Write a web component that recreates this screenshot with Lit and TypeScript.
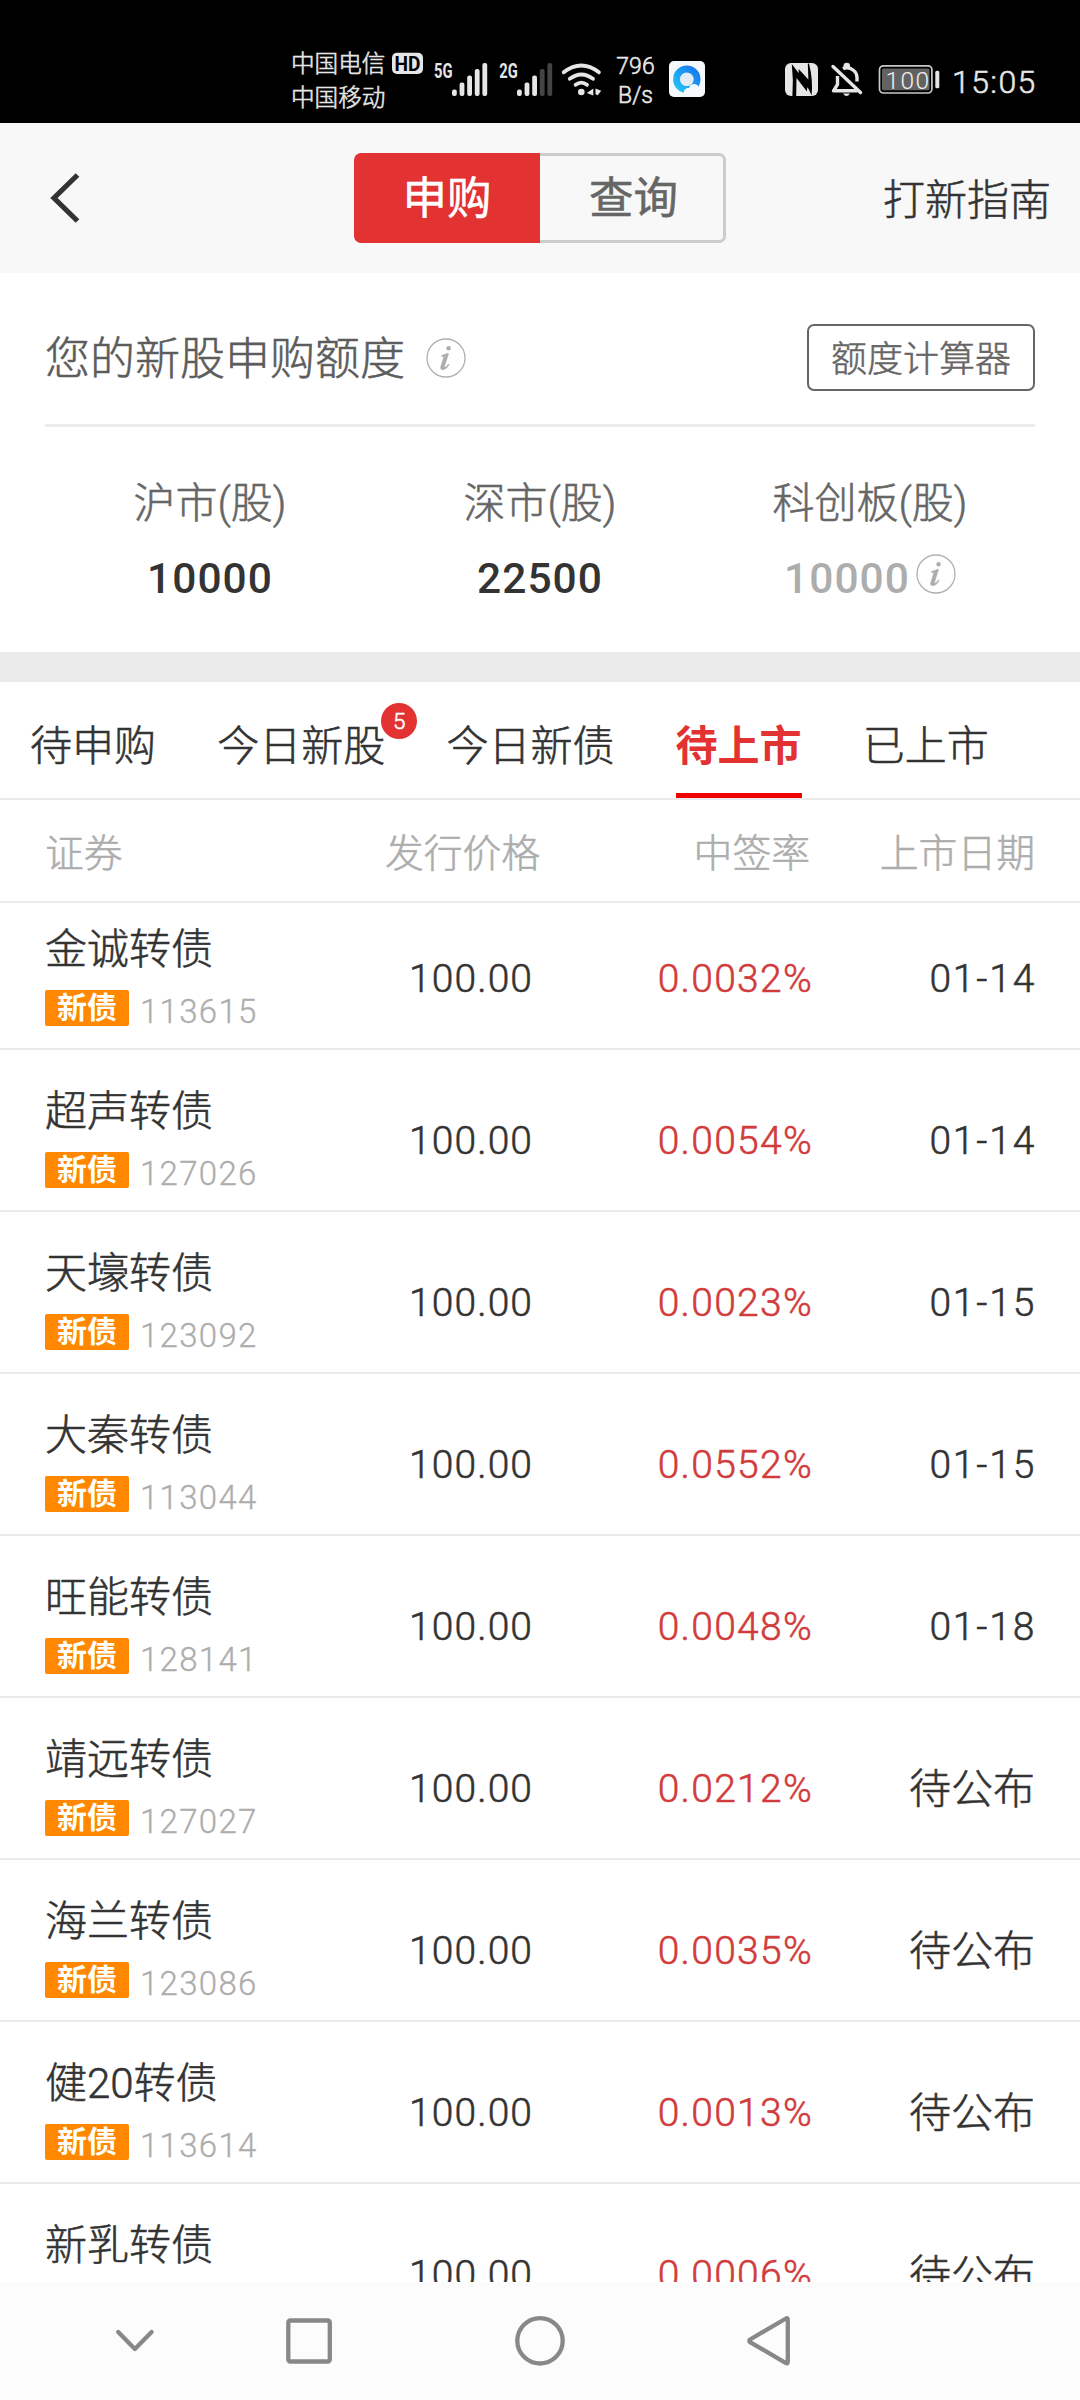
import { LitElement, html, svg, css } from "lit";
import { customElement, property } from "lit/decorators.js";
import { classMap } from "lit/directives/class-map.js";

const BONDS = [
  ["金诚转债", "113615", "0.0032%", "01-14"],
  ["超声转债", "127026", "0.0054%", "01-14"],
  ["天壕转债", "123092", "0.0023%", "01-15"],
  ["大秦转债", "113044", "0.0552%", "01-15"],
  ["旺能转债", "128141", "0.0048%", "01-18"],
  ["靖远转债", "127027", "0.0212%", "待公布"],
  ["海兰转债", "123086", "0.0035%", "待公布"],
  ["健20转债", "113614", "0.0013%", "待公布"],
  ["新乳转债", "", "0.0006%", "待公布"],
];

const TABS = [
  { label: "待申购" },
  { label: "今日新股", badge: 5 },
  { label: "今日新债" },
  { label: "待上市", active: true },
  { label: "已上市" },
];

@customElement("status-bar")
export class StatusBar extends LitElement {
  static styles = css`
    :host {
      display: flex;
      height: 123px;
      background: #000;
      color: #e6e6e6;
      font-family: Roboto, "Noto Sans CJK SC", sans-serif;
      font-weight: 300;
      box-sizing: border-box;
      padding: 46px 0 0 291px;
    }
    .carriers { width: 94px; font-size: 23.6px; line-height: 34px; white-space: nowrap; padding-top: 1px; }
    .net { font-weight: 700; fill: #e6e6e6; }
    .bold { -webkit-text-stroke: 0; }
    .speed {
      width: 45px;
      margin-left: 41px;
      text-align: center;
      font-size: 23px;
      line-height: 29px;
      padding-top: 6px;
    }
    .rest { display: block; width: 284px; height: 68px; margin-left: 7px; }
    .left { display: block; width: 221px; height: 68px; margin-right: -39px; margin-left: 5px; }
    .clock { font-size: 32px; line-height: 36px; padding-top: 18px; margin-left: 3px; letter-spacing: 1.4px; }
  `;

  private bars(x: number, lit: number) {
    const tops = [43.5, 36.5, 29.5, 23, 17];
    return tops.map(
      (top, i) => svg`<rect x=${x + i * 7.6} y=${top} width="4.8" height=${50 - top} rx="2"
        fill=${i < lit ? "#e6e6e6" : "#444"}></rect>`,
    );
  }

  render() {
    return html`
      <div class="carriers">中国电信<br />中国移动</div>
      <svg class="left" viewBox="390 46 221 68">
        <rect x="392" y="52.7" width="31" height="21.3" rx="5" fill="#e6e6e6"></rect>
        <text class="bold" x="394.500" y="70.500" font-size="20.500" textLength="26" lengthAdjust="spacingAndGlyphs"
          font-weight="700" fill="#000">HD</text>
        <text x="434" y="77.5" font-size="20" textLength="18.5" lengthAdjust="spacingAndGlyphs" class="net bold">5G</text>
        <text x="499.3" y="77.5" font-size="20" textLength="18.5" lengthAdjust="spacingAndGlyphs" class="net bold">2G</text>
        <g transform="translate(0 46)">${this.bars(452, 5)}${this.bars(517, 3)}</g>
        <g fill="none" stroke="#e6e6e6" stroke-width="3.8" stroke-linecap="round">
          <path d="M563.7 72.3q17.6 -13.6 35.2 0"></path>
          <path d="M569.8 78.8q11.6 -8.6 23.2 0"></path>
          <path d="M575.6 84.8q5.7 -4.4 11.4 0"></path>
        </g>
        <circle cx="581.3" cy="92" r="3.3" fill="#e6e6e6"></circle>
        <path d="M593.3 88.5v7l-6.5 -2.5zM595.5 88.5l5.7 2.2l-3.4 4.6l-2.3 -1z" fill="#e6e6e6"></path>
      </svg>
      <div class="speed">796<br />B/s</div>
      <svg class="rest" viewBox="665 46 284 68">
        <defs>
          <linearGradient id="ring" x1="0" y1="1" x2="1" y2="0">
            <stop offset="0" stop-color="#22c4f5"></stop><stop offset="1" stop-color="#1677ef"></stop>
          </linearGradient>
        </defs>
        <rect x="669" y="61" width="36" height="36" rx="5" fill="#f6f9fc"></rect>
        <circle cx="686.8" cy="79.3" r="10.3" fill="#e3ebf4" stroke="url(#ring)" stroke-width="6.8"></circle>
        <path d="M684 94c-1-4 2-6.500 5-6c1-4.500 8-5.500 9.500-1c4 0 5 4 3 7z" fill="#f6f9fc"></path>
        <rect x="785" y="63" width="33" height="33" rx="6" fill="#e6e6e6"></rect>
        <path d="M791.800 64q1.800 16 .6 32h3.800l.3 -18l10.500 13.500l.2 -7.500l-10.500 -13.500z
          M811.600 95.500q1.500 -16 -2.600 -32h-1.200l.6 16l-9.800 -10.500l.3 7.500l10 13z" fill="#000"></path>
        <g fill="none" stroke="#e6e6e6" stroke-width="3.400" stroke-linejoin="round">
          <path d="M837.500 76v8.500l-4 6.300h24M843 68.800q3.500 -2 7.500 -.3c4.500 2 6.500 5 6.500 9v4"></path>
          <path d="M833 66.500l27.500 26" stroke-linecap="round"></path>
        </g>
        <path d="M843.500 68v-2a3.300 3.300 0 0 1 6.600 0v2zM843 93.500h7q-3.500 5 -7 0z" fill="#e6e6e6"></path>
        <rect x="879.500" y="65.800" width="52.400" height="27.200" rx="4" fill="none" stroke="#c8c8c8" stroke-width="1.700"></rect>
        <rect x="882" y="68.500" width="47.500" height="21.800" rx="1.500" fill="#626262"></rect>
        <rect x="935.300" y="70.700" width="4" height="17.600" rx="1.500" fill="#e6e6e6"></rect>
        <text x="885.500" y="89" font-size="24.500" textLength="43.500" fill="#f0f0f0">100</text>
      </svg>
      <div class="clock">15:05</div>
    `;
  }
}

@customElement("info-icon")
export class InfoIcon extends LitElement {
  static styles = css`
    :host { display: block; width: 40px; height: 40px; }
    .icon { display: block; }
  `;
  render() {
    return html`<svg class="icon" width="40" height="40" viewBox="0 0 40 40">
      <circle cx="20" cy="20" r="19" fill="none" stroke="#b0b0b0" stroke-width="1.3"></circle>
      <circle cx="22.600" cy="10.300" r="2.200" fill="#adadad"></circle>
      <path d="M15.500 17.500q3.500 -1 6 -2.200l1 .4l-4 12.500q-.3 1.500 1.200 .8q1.500 -1 2.700 -3l.8 .5q-2.800 5 -6.200 5.300q-3 0 -2.200 -3.200l2.800 -9q.3 -1.500 -2.100 -1.300z" fill="#adadad" stroke="#adadad" stroke-width=".6"></path>
    </svg>`;
  }
}

@customElement("bond-row")
export class BondRow extends LitElement {
  @property() name = "";
  @property() code = "";
  @property() rate = "";
  @property() date = "";

  static styles = css`
    :host {
      display: grid;
      grid-template-columns: 320px 1fr 280px 223px;
      box-sizing: border-box;
      height: 162px;
      padding: 32px 45px 0;
      border-bottom: 2px solid #ebebeb;
      color: #333;
    }
    .name { font-size: 42px; line-height: 56px; padding-top: 2px; }
    .meta { display: flex; align-items: center; height: 36px; margin-top: 12px; gap: 11px; }
    .tag {
      width: 84px;
      height: 36px;
      border-radius: 2px;
      background: #ff8800;
      color: #fff;
      font-size: 30px;
      line-height: 35px;
      font-weight: 700;
      text-align: center;
      -webkit-text-stroke: 0;
    }
    .code { font-size: 33px; letter-spacing: 1.3px; color: #adadad; padding-top: 6px; -webkit-text-stroke: .3px; }
    .cell { font-size: 39px; line-height: 56px; letter-spacing: 1.100px; text-align: right; padding-top: 31px; }
    .price { text-align: left; padding-left: 44px; }
    .rate { color: #d13b3b; letter-spacing: 1.300px; }
    .date { letter-spacing: 1.800px; }
    .pending { font-size: 42px; letter-spacing: 0; padding-top: 32px; margin-right: 1px; }
  `;

  render() {
    return html`
      <div class="security">
        <div class="name">${this.name}</div>
        ${this.code
          ? html`<div class="meta"><span class="tag">新债</span><span class="code">${this.code}</span></div>`
          : null}
      </div>
      <div class="cell price">100.00</div>
      <div class="cell rate">${this.rate}</div>
      <div class=${classMap({ cell: true, date: true, pending: !this.date.includes("-") })}>${this.date}</div>
    `;
  }
}

@customElement("app-root")
export class AppRoot extends LitElement {
  static styles = css`
    :host {
      display: flex;
      flex-direction: column;
      width: 1080px;
      height: 2400px;
      overflow: hidden;
      background: #fff;
      color: #333;
      font-family: Roboto, "Noto Sans CJK SC", sans-serif;
      font-weight: 300;
      -webkit-text-stroke: .55px;
    }
    .header {
      display: grid;
      grid-template-columns: 1fr 372px 1fr;
      align-items: center;
      height: 150px;
      flex: none;
      background: #f8f8f8;
    }
    .back { display: block; margin-left: 48px; }
    .segments { display: flex; height: 90px; font-size: 44.500px; line-height: 93px; text-align: center; font-weight: 400; }
    .segment { flex: 0 0 186px; box-sizing: border-box; }
    .on { background: #e23232; color: #fff; border-radius: 7px 0 0 7px; }
    .off { border: 3px solid #ccc; border-left: 0; border-radius: 0 7px 7px 0; color: #666; line-height: 87px; padding-left: 4px; }
    .guide { justify-self: end; margin-right: 29px; font-size: 42px; line-height: 60px; padding-top: 5px; }
    .quota { height: 379px; flex: none; padding: 0 45px; }
    .quota-head { display: flex; align-items: center; height: 151px; border-bottom: 3px solid #ebebeb; }
    .quota-title { font-size: 45px; line-height: 66px; color: #5c5c5c; margin-top: 23px; }
    .quota-head info-icon { margin: 18px auto 0 21px; }
    .calc {
      box-sizing: border-box;
      width: 228px;
      height: 67px;
      margin-top: 18px;
      border: 2px solid #666;
      border-radius: 7px;
      font-size: 36px;
      line-height: 68px;
      color: #666;
      text-align: center;
    }
    .markets { display: grid; grid-template-columns: repeat(3, 1fr); text-align: center; padding-top: 47px; }
    .market-label { font-size: 42px; line-height: 60px; color: #666; }
    .market-value {
      display: flex;
      justify-content: center;
      align-items: center;
      height: 60px;
      margin-top: 14px;
      font-size: 42.500px;
      letter-spacing: 1px;
      font-weight: 500;
      gap: 6px;
      -webkit-text-stroke: 0;
    }
    .muted { color: #adadad; }
    .muted info-icon { margin-top: -8px; }
    .band { height: 30px; flex: none; background: #ebebeb; }
    .tabs { display: flex; gap: 61.200px; height: 116px; flex: none; padding-left: 30px; border-bottom: 2px solid #ebebeb; }
    .tab { position: relative; box-sizing: border-box; height: 116px; font-size: 42px; line-height: 129px; }
    .current { color: #e23232; font-weight: 700; border-bottom: 5px solid #f20000; -webkit-text-stroke: 0; }
    .badge {
      position: absolute;
      left: 164px;
      top: 21px;
      width: 36px;
      height: 36px;
      border-radius: 50%;
      background: #e23232;
      color: #fff;
      font-size: 22.500px;
      line-height: 37px;
      text-align: center;
    }
    .columns {
      display: grid;
      grid-template-columns: 340px 1fr 268px 225px;
      height: 101px;
      flex: none;
      padding: 0 45px;
      border-bottom: 2px solid #ebebeb;
      color: #adadad;
      font-size: 38.800px;
      line-height: 108px;
    }
    .right { text-align: right; }
    .viewport { flex: 1; min-height: 0; overflow: hidden; }
    .list { margin-top: -15px; }
    .nav { height: 118px; flex: none; background: #fcfcfc; }
    .nav-icons { display: block; }
  `;

  render() {
    return html`
      <status-bar></status-bar>
      <header class="header">
        <svg class="back" width="36" height="56" viewBox="0 0 36 56">
          <path d="M29.500 5L6 28l23.500 23" fill="none" stroke="#333" stroke-width="5.200"></path>
        </svg>
        <div class="segments">
          <div class="segment on">申购</div>
          <div class="segment off">查询</div>
        </div>
        <div class="guide">打新指南</div>
      </header>
      <section class="quota">
        <div class="quota-head">
          <div class="quota-title">您的新股申购额度</div>
          <info-icon></info-icon>
          <div class="calc">额度计算器</div>
        </div>
        <div class="markets">
          <div><div class="market-label">沪市(股)</div><div class="market-value">10000</div></div>
          <div><div class="market-label">深市(股)</div><div class="market-value">22500</div></div>
          <div>
            <div class="market-label">科创板(股)</div>
            <div class="market-value muted">10000<info-icon></info-icon></div>
          </div>
        </div>
      </section>
      <div class="band"></div>
      <nav class="tabs">
        ${TABS.map(
          (t) => html`<div class=${classMap({ tab: true, current: !!t.active })}>
            ${t.label}${t.badge ? html`<span class="badge">${t.badge}</span>` : null}
          </div>`,
        )}
      </nav>
      <div class="columns">
        <span>证券</span><span>发行价格</span><span class="right">中签率</span><span class="right">上市日期</span>
      </div>
      <div class="viewport">
        <div class="list">
          ${BONDS.map(
            ([name, code, rate, date]) =>
              html`<bond-row .name=${name} .code=${code} .rate=${rate} .date=${date}></bond-row>`,
          )}
        </div>
      </div>
      <footer class="nav">
        <svg class="nav-icons" width="1080" height="118" viewBox="0 2282 1080 118">
          <g fill="none" stroke="#888" stroke-width="4.300" stroke-linejoin="round" stroke-linecap="round">
            <path d="M118.200 2332l16.700 17l16.700 -17"></path>
            <rect x="288.300" y="2320.500" width="41.500" height="41" rx="2"></rect>
            <circle cx="540" cy="2340.800" r="22.700"></circle>
            <path d="M786 2318.500q1.800 -.8 1.800 1v42.600q0 1.800 -1.800 1l-36 -21q-1.400 -1.300 0 -2.600z"></path>
          </g>
        </svg>
      </footer>
    `;
  }
}
